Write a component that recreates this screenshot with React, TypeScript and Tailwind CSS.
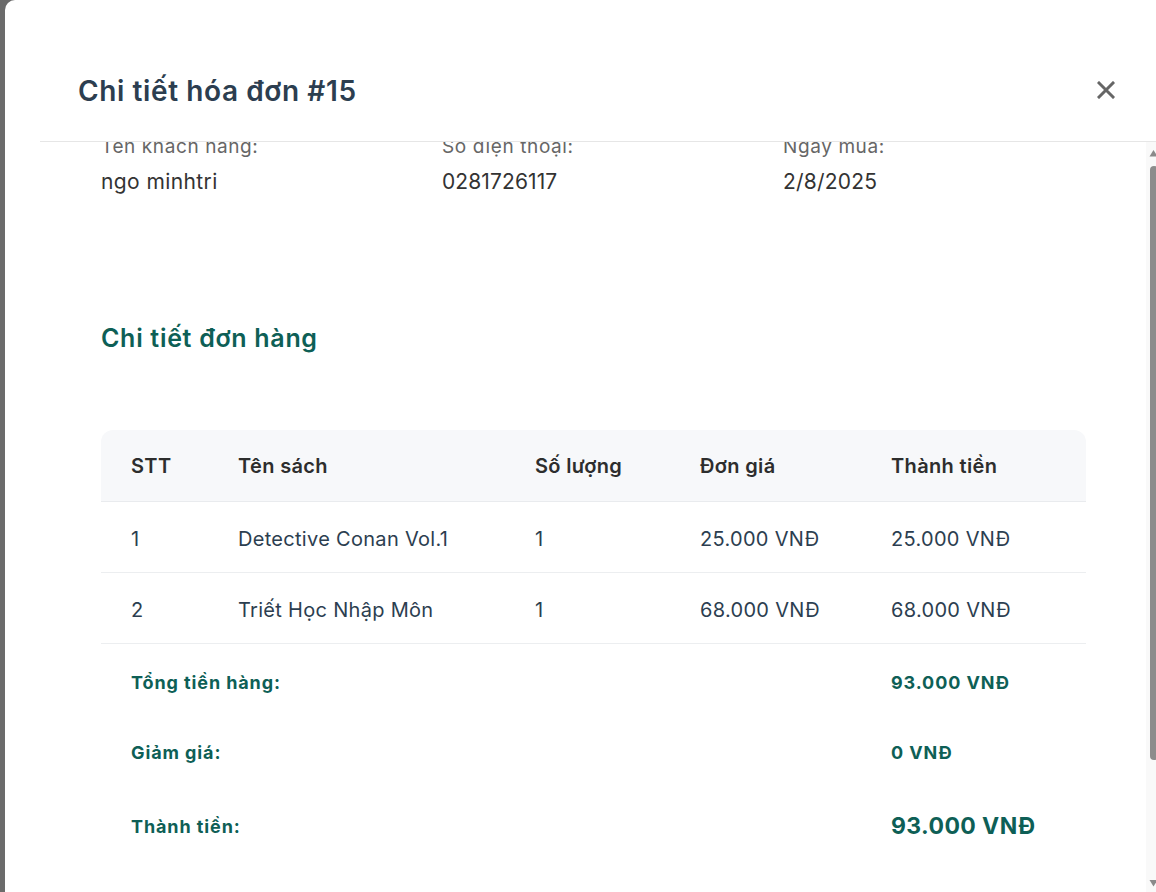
import React from "react";

const rows = [
  { stt: "1", name: "Detective Conan Vol.1", qty: "1", price: "25.000 VNĐ", total: "25.000 VNĐ" },
  { stt: "2", name: "Triết Học Nhập Môn", qty: "1", price: "68.000 VNĐ", total: "68.000 VNĐ" },
];

const cols = "grid grid-cols-[137px_297px_165px_191px_1fr]";

export default function App() {
  return (
    <div
      className="w-[1156px] h-[892px] overflow-hidden bg-[#6b6b6b] flex"
      style={{ fontFamily: "Inter, 'Noto Sans', sans-serif" }}
    >
      <div className="ml-[5px] w-[1170px] shrink-0 h-full bg-white rounded-tl-[10px] flex flex-col">
        {/* Header */}
        <div className="h-[141px] shrink-0 flex items-start justify-between pl-[73px] pr-[60px] pt-[74px]">
          <h2 className="text-[28px] leading-[34px] font-semibold text-[#2c3e50] tracking-[0.6px]">
            Chi tiết hóa đơn #15
          </h2>
          <button className="mt-[7px] w-[18px] h-[18px] text-[#666]">
            <svg viewBox="0 0 18 18" width="18" height="18" fill="none" stroke="currentColor" strokeWidth="3" strokeLinecap="square">
              <path d="M2 2L16 16M16 2L2 16" />
            </svg>
          </button>
        </div>

        {/* Body */}
        <div className="ml-[35px] mr-[14px] flex-1 min-h-0 border-t border-[#e6e6e6] flex">
          <div className="flex-1 min-w-0 overflow-hidden pl-[61px] pr-[60px]">
            <div className="-mt-[7px]">
              <div className="grid grid-cols-[341px_341px_1fr]">
                <div className="flex flex-col">
                  <span className="text-[19px] leading-[24px] tracking-[0.6px] text-[#666]">Tên khách hàng:</span>
                  <span className="mt-[9px] text-[21px] leading-[28px] tracking-[0.4px] text-[#333]">ngo minhtri</span>
                </div>
                <div className="flex flex-col">
                  <span className="text-[19px] leading-[24px] tracking-[0.6px] text-[#666]">Số điện thoại:</span>
                  <span className="mt-[9px] text-[21px] leading-[28px] tracking-[0.1px] text-[#333]">0281726117</span>
                </div>
                <div className="flex flex-col">
                  <span className="text-[19px] leading-[24px] tracking-[0.6px] text-[#666]">Ngày mua:</span>
                  <span className="mt-[9px] text-[21px] leading-[28px] tracking-[0.2px] text-[#333]">2/8/2025</span>
                </div>
              </div>

              <h3 className="mt-[126px] text-[25px] leading-[32px] font-semibold tracking-[0.7px] text-[#0e5f56]">
                Chi tiết đơn hàng
              </h3>

              <div className="mt-[76px] w-[985px]">
                <div className={`${cols} h-[72px] items-center bg-[#f7f8fa] rounded-t-[12px] border-b border-[#e9ebee] text-[20px] tracking-[0.35px] font-semibold text-[#2d2d2d]`}>
                  <div className="pl-[30px]">STT</div>
                  <div>Tên sách</div>
                  <div>Số lượng</div>
                  <div>Đơn giá</div>
                  <div>Thành tiền</div>
                </div>
                {rows.map((r) => (
                  <div key={r.stt} className={`${cols} h-[71px] pt-[3px] items-center border-b border-[#eceef0] text-[20px] tracking-[0.3px] text-[#2c3e50]`}>
                    <div className="pl-[30px]">{r.stt}</div>
                    <div>{r.name}</div>
                    <div>{r.qty}</div>
                    <div>{r.price}</div>
                    <div>{r.total}</div>
                  </div>
                ))}
                <div className={`${cols} h-[76px] items-center text-[18px] tracking-[0.9px] font-bold text-[#0e5f56]`}>
                  <div className="col-span-4 pl-[30px]">Tổng tiền hàng:</div>
                  <div>93.000 VNĐ</div>
                </div>
                <div className={`${cols} h-[64px] items-center text-[18px] tracking-[0.9px] font-bold text-[#0e5f56]`}>
                  <div className="col-span-4 pl-[30px]">Giảm giá:</div>
                  <div>0 VNĐ</div>
                </div>
                <div className={`${cols} h-[84px] items-center font-bold text-[#0e5f56]`}>
                  <div className="col-span-4 pl-[30px] text-[18px] tracking-[0.9px]">Thành tiền:</div>
                  <div className="text-[23px] tracking-[0.4px]">93.000 VNĐ</div>
                </div>
              </div>
            </div>
          </div>

          {/* Scrollbar drawing */}
          <div className="w-[15px] shrink-0 bg-[#f9f9f9] flex flex-col items-center">
            <svg width="15" height="24" viewBox="0 0 15 24" className="shrink-0">
              <path d="M7.5 8L11.5 14.5H3.5Z" fill="#8a8a8a" />
            </svg>
            <div className="w-[15px] h-[594px] shrink-0 flex justify-center">
              <div className="w-[8px] h-full bg-[#8c8c8c] rounded-[4px]" />
            </div>
            <div className="flex-1" />
            <svg width="15" height="14" viewBox="0 0 15 14" className="shrink-0">
              <path d="M3.5 2H11.5L7.5 8.5Z" fill="#8a8a8a" />
            </svg>
          </div>
        </div>
      </div>
    </div>
  );
}
